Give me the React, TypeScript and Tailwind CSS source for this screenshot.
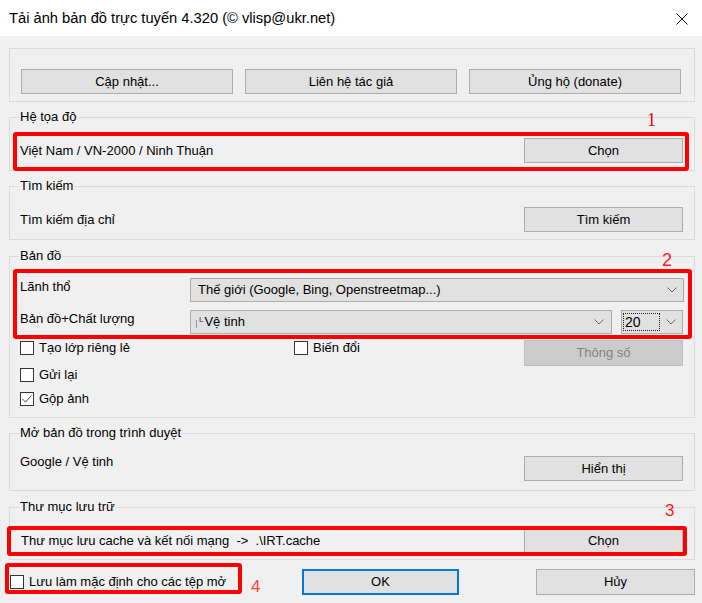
import React from "react";

function Btn({ children, className = "" }: { children: React.ReactNode; className?: string }) {
  return (
    <div className={`flex items-center justify-center bg-[#e1e1e1] border border-[#adadad] h-[25px] shrink-0 ${className}`}>
      {children}
    </div>
  );
}

function Group({ title, className = "", children }: { title?: string; className?: string; children?: React.ReactNode }) {
  return (
    <div className={`relative border border-[#dcdcdc] ${className}`}>
      {title && (
        <span className="absolute left-[9px] top-[-9px] px-[1px] leading-[16px] bg-[#f0f0f0] whitespace-nowrap">{title}</span>
      )}
      {children}
    </div>
  );
}

function Chevron() {
  return (
    <svg width="10" height="6" viewBox="0 0 10 6" className="shrink-0">
      <polyline points="0.5,0.5 5,5 9.5,0.5" fill="none" stroke="#6b6b6b" strokeWidth="1" />
    </svg>
  );
}

function Check({ checked = false, label }: { checked?: boolean; label: string }) {
  return (
    <div className="flex items-center gap-[5px] h-[14px]">
      <div className="w-[14px] h-[14px] border border-[#333333] bg-white shrink-0 flex items-center justify-center">
        {checked && (
          <svg width="12" height="12" viewBox="0 0 12 12">
            <polyline points="1.5,6 4.5,9 10.5,2.5" fill="none" stroke="#444444" strokeWidth="1" />
          </svg>
        )}
      </div>
      <span className="leading-[14px] whitespace-nowrap">{label}</span>
    </div>
  );
}

export default function App() {
  return (
    <div
      className="relative w-[702px] h-[603px] bg-[#f0f0f0] text-black text-[13px] leading-[16px] overflow-hidden"
      style={{ fontFamily: '"Liberation Sans", Arial, sans-serif' }}
    >
      {/* Title bar */}
      <div className="h-[36px] bg-white flex items-center justify-between pl-[9px] pr-[14px]">
        <span className="text-[14.7px] whitespace-nowrap">Tải ảnh bản đồ trực tuyến 4.320 (© vlisp@ukr.net)</span>
        <svg width="12" height="12" viewBox="0 0 12 12" className="mt-[1px]">
          <line x1="0.5" y1="0.5" x2="11.5" y2="11.5" stroke="#111" strokeWidth="1" />
          <line x1="11.5" y1="0.5" x2="0.5" y2="11.5" stroke="#111" strokeWidth="1" />
        </svg>
      </div>

      <div className="flex flex-col pl-[9px] pr-[7px]">
        {/* Top buttons */}
        <Group className="mt-[12px] h-[54px]">
          <div className="flex pt-[20px] pl-[11px] gap-[12px]">
            <Btn className="w-[212px]">Cập nhật...</Btn>
            <Btn className="w-[212px]">Liên hệ tác giả</Btn>
            <Btn className="w-[212px]">Ủng hộ (donate)</Btn>
          </div>
        </Group>

        {/* Hệ tọa độ */}
        <Group title="Hệ tọa độ" className="mt-[15px] h-[54px]">
          <div className="flex items-center pt-[20px] pl-[10px] pr-[11px]">
            <span className="whitespace-nowrap">Việt Nam / VN-2000 / Ninh Thuận</span>
            <Btn className="ml-auto w-[159px]">Chọn</Btn>
          </div>
        </Group>

        {/* Tìm kiếm */}
        <Group title="Tìm kiếm" className="mt-[15px] h-[54px]">
          <div className="flex items-center pt-[20px] pl-[10px] pr-[11px]">
            <span className="whitespace-nowrap">Tìm kiếm địa chỉ</span>
            <Btn className="ml-auto w-[159px]">Tìm kiếm</Btn>
          </div>
        </Group>

        {/* Bản đồ */}
        <Group title="Bản đồ" className="mt-[16px] h-[162px]">
          <div className="flex flex-col pt-[21px] pl-[10px] pr-[10px]">
            <div className="flex items-start h-[24px]">
              <span className="w-[170px] shrink-0 pt-[1px] whitespace-nowrap">Lãnh thổ</span>
              <div className="flex-1 h-[24px] bg-[#e1e1e1] border border-[#adadad] flex items-center pl-[7px] pr-[6px]">
                <span className="flex-1 whitespace-nowrap">Thế giới (Google, Bing, Openstreetmap...)</span>
                <Chevron />
              </div>
            </div>
            <div className="flex items-start h-[24px] mt-[8px]">
              <span className="w-[170px] shrink-0 pt-[1px] whitespace-nowrap">Bản đồ+Chất lượng</span>
              <div className="w-[422px] h-[24px] bg-[#e1e1e1] border border-[#adadad] flex items-center pl-[5px] pr-[7px]">
                <span className="w-[1px] h-[8px] bg-[#8f8fd0] mt-[4px] shrink-0" />
                <span className="text-[8px] leading-[8px] ml-[2px] mb-[4px] text-[#333]">L</span>
                <span className="flex-1 whitespace-nowrap ml-[1px]">Vệ tinh</span>
                <Chevron />
              </div>
              <div className="ml-[9px] w-[62px] h-[24px] bg-[#e1e1e1] border border-[#adadad] flex items-center pl-[1px] pr-[6px]">
                <div className="w-[37px] h-[18px] border border-dotted border-[#222] flex items-center pl-[1px] text-[14px]">
                  20
                </div>
                <div className="flex-1" />
                <Chevron />
              </div>
            </div>
            <div className="flex items-start h-[26px] mt-[6px]">
              <div className="w-[274px] shrink-0 pt-[1px]">
                <Check label="Tạo lớp riêng lẻ" />
              </div>
              <div className="w-[230px] shrink-0 pt-[1px]">
                <Check label="Biến đổi" />
              </div>
              <div className="flex items-center justify-center w-[159px] h-[26px] bg-[#cccccc] border border-[#bfbfbf] text-[#838383]">
                Thông số
              </div>
            </div>
            <div className="mt-[2px]">
              <Check label="Gửi lại" />
            </div>
            <div className="mt-[10px]">
              <Check checked label="Gộp ảnh" />
            </div>
          </div>
        </Group>

        {/* Mở bản đồ trong trình duyệt */}
        <Group title="Mở bản đồ trong trình duyệt" className="mt-[15px] h-[58px]">
          <div className="flex items-start pt-[20px] pl-[10px] pr-[11px]">
            <span className="whitespace-nowrap">Google / Vệ tinh</span>
            <Btn className="ml-auto mt-[2px] w-[159px]">Hiển thị</Btn>
          </div>
        </Group>

        {/* Thư mục lưu trữ */}
        <Group title="Thư mục lưu trữ" className="mt-[16px] h-[53px]">
          <div className="flex items-center pt-[20px] pl-[11px] pr-[11px]">
            <span className="whitespace-pre">Thư mục lưu cache và kết nối mạng  -&gt;  .\IRT.cache</span>
            <Btn className="ml-auto w-[159px]">Chọn</Btn>
          </div>
        </Group>

        {/* Bottom row */}
        <div className="flex items-center h-[26px] mt-[9px]">
          <div className="w-[293px] shrink-0 pl-[1px]">
            <Check label="Lưu làm mặc định cho các tệp mở" />
          </div>
          <div className="w-[157px] h-[26px] shrink-0 flex items-center justify-center bg-[#e1e1e1] border-2 border-[#0078d7]">
            OK
          </div>
          <div className="ml-[77px] w-[159px] h-[26px] shrink-0 flex items-center justify-center bg-[#e1e1e1] border border-[#adadad]">
            Hủy
          </div>
        </div>
      </div>

      {/* Red annotations */}
      <div className="absolute left-[13px] top-[132px] w-[676px] h-[39px] border-4 border-[#ff0000] rounded-[3px]" />
      <div className="absolute left-[13px] top-[269px] w-[679px] h-[70px] border-4 border-[#ff0000] rounded-[3px]" />
      <div className="absolute left-[7px] top-[526px] w-[680px] h-[30px] border-4 border-[#ff0000] rounded-[3px]" />
      <div className="absolute left-[5px] top-[563px] w-[237px] h-[31px] border-4 border-[#ff0000] rounded-[3px]" />

      <span
        className="absolute left-[647px] top-[110px] text-[18px] leading-[20px] text-[#ff0000]"
        style={{ fontFamily: '"Liberation Serif", serif' }}
      >
        1
      </span>
      <span className="absolute left-[662px] top-[250px] text-[18px] leading-[20px] text-[#ff1a1a]">2</span>
      <span className="absolute left-[665px] top-[501px] text-[17px] leading-[20px] text-[#ff1a1a]">3</span>
      <span className="absolute left-[251px] top-[577px] text-[17px] leading-[20px] text-[#ff4040]">4</span>
    </div>
  );
}
